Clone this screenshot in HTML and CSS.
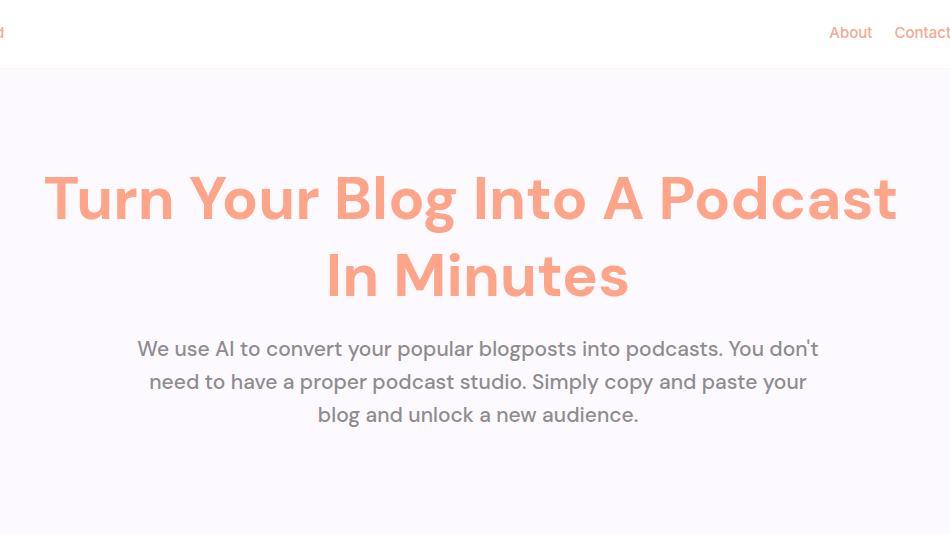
FILE: index.html
```html
<!DOCTYPE html>
<html lang="en">
<head>
<meta charset="utf-8">
<meta name="viewport" content="width=device-width, initial-scale=1">
<title>Turn Your Blog Into A Podcast</title>
<link rel="stylesheet" href="styles.css">
</head>
<body>
<header class="site-header">
  <a class="brand" href="#">d</a>
  <nav class="nav" aria-label="Main">
    <a href="#">About</a>
    <a href="#">Contact</a>
  </nav>
</header>
<main class="hero">
  <h1 class="hero-title">Turn Your Blog Into A Podcast <br>In Minutes</h1>
  <p class="hero-text">We use AI to convert your popular blogposts into podcasts. You don't<br>need to have a proper podcast studio. Simply copy and paste your<br>blog and unlock a new audience.</p>
</main>
</body>
</html>
```

FILE: styles.css
```css
* { box-sizing: border-box; }
body {
  margin: 0;
  min-height: 100vh;
  background: #fcfaff;
  font-family: "DM Sans", Inter, sans-serif;
  overflow-x: hidden;
}
.site-header {
  display: flex;
  align-items: center;
  justify-content: space-between;
  padding: 21px 0 23px;
  background: #fff;
  border-bottom: 1px solid #f8f6fa;
  font-family: Inter, sans-serif;
  font-size: 15px;
  line-height: 24px;
  font-weight: 500;
}
.site-header a { color: #f5a990; text-decoration: none; }
.brand { margin-left: -5px; }
.nav { display: flex; gap: 22px; margin-right: -1px; }
.hero {
  padding: 91px 0 90px 6px;
  text-align: center;
}
.hero-title {
  margin: 0;
  color: #fea488;
  font-size: 60px;
  line-height: 77px;
  font-weight: 700;
  white-space: pre;
}
.hero-text {
  margin: 19px 0 0;
  color: #8f8c90;
  font-size: 21px;
  font-weight: 500;
  line-height: 33px;
}
```
